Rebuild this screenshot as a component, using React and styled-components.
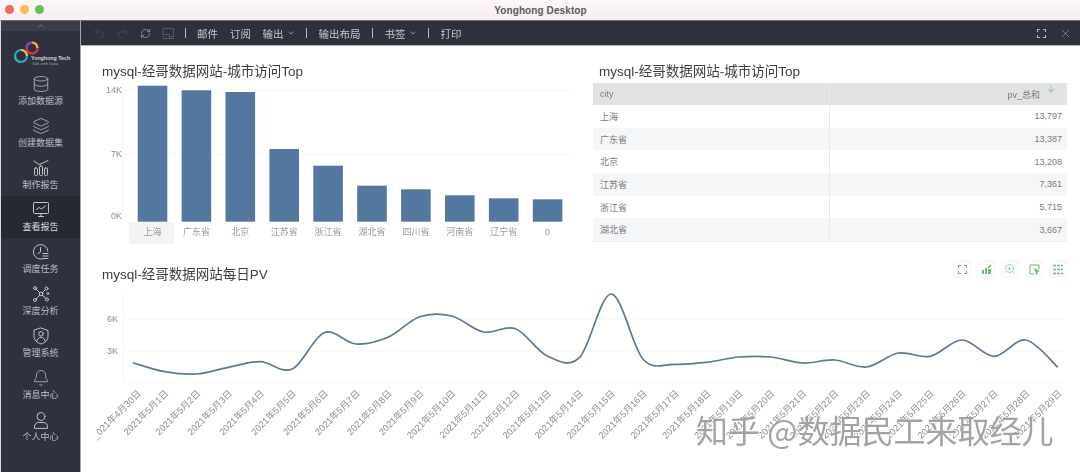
import React from 'react'
import styled, { createGlobalStyle } from 'styled-components'
import { Bell, ChevronDown, ChevronUp, Database, Layers, Redo2, RefreshCw, Undo2, X, ZoomIn, ArrowDown } from 'lucide-react'

const FONT = '"Liberation Sans", "Noto Sans CJK SC", sans-serif'

const GlobalStyle = createGlobalStyle`
  html, body { margin: 0; padding: 0; background: #fff; }
  body { font-family: ${FONT}; overflow: hidden; }
`

const Window = styled.div`
  position: relative;
  width: 1080px;
  height: 472px;
  overflow: hidden;
  display: flex;
  flex-direction: column;
  filter: blur(0.45px);
`

const TitleBar = styled.div`
  height: 20px;
  flex: none;
  display: flex;
  align-items: center;
  justify-content: center;
  background: linear-gradient(#fbf6f8, #f8edf2);
  position: relative;
`

const Lights = styled.div`
  position: absolute;
  left: 5px;
  top: 5px;
  display: flex;
  gap: 6px;
`

const Light = styled.span`
  width: 9px;
  height: 9px;
  border-radius: 50%;
  background: ${p => p.$color};
`

const WindowName = styled.div`
  font-size: 10px;
  font-weight: 700;
  color: #5a5a5e;
  letter-spacing: 0.1px;
  margin-left: 1px;
`

const Body = styled.div`
  flex: 1;
  display: flex;
  min-height: 0;
`

const Sidebar = styled.aside`
  flex: none;
  background: #2f323e;
  border-left: 1px solid #d9d9de;
  border-right: 1px solid #a4a6ad;
  box-sizing: border-box;
  width: 81px;
  display: flex;
  flex-direction: column;
  border-top: 1px solid #6b6c73;
`

const Collapse = styled.div`
  height: 10px;
  background: #3b3e49;
  display: flex;
  align-items: center;
  justify-content: center;
  color: #8a8c94;
`

const LogoBox = styled.div`
  height: 39px;
  flex: none;
`

const NavItem = styled.div`
  height: 42px;
  box-sizing: border-box;
  padding-top: 5px;
  display: flex;
  flex-direction: column;
  align-items: center;
  gap: 1px;
  color: #c3c5cb;
  background: ${p => (p.$active ? '#262832' : 'transparent')};
`

const NavLabel = styled.span`
  font-size: 9px;
  line-height: 14px;
  color: ${p => (p.$active ? '#d9dadf' : '#bcbec5')};
`

const Content = styled.div`
  flex: 1;
  min-width: 0;
  display: flex;
  flex-direction: column;
`

const Toolbar = styled.div`
  height: 26px;
  flex: none;
  box-sizing: border-box;
  background: #2e313d;
  border-top: 1px solid #6b6c73;
  border-bottom: 1px solid #aeb3b3;
  display: flex;
  align-items: center;
  padding: 0 8px 0 11px;
  color: #c3c5cb;
  font-size: 10.5px;
`

const ToolIcon = styled.span`
  width: 14px;
  height: 14px;
  margin-right: 9px;
  display: flex;
  align-items: center;
  justify-content: center;
  color: ${p => (p.$dim ? '#565963' : '#b9bbc2')};
`

const ToolDivider = styled.span`
  width: 1px;
  height: 10px;
  background: #b9bbc2;
  margin: 0 ${p => p.$right || 12}px 0 ${p => p.$left || 11}px;
`

const ToolText = styled.span`
  display: flex;
  align-items: center;
  gap: 3px;
  margin-right: ${p => p.$gap || 0}px;
  color: #c6c8ce;
`

const ToolRight = styled.div`
  margin-left: auto;
  display: flex;
  align-items: center;
  gap: 12px;
  color: #b4b6bd;
`

const Main = styled.main`
  flex: 1;
  min-height: 0;
  display: flex;
  flex-direction: column;
  background: #fff;
`

const TopRow = styled.div`
  height: 214px;
  flex: none;
  display: grid;
  grid-template-columns: 512px 474px;
`

const Panel = styled.section`
  padding-top: 18px;
  min-width: 0;
`

const Title = styled.h2`
  margin: 0 0 ${p => p.$below || 0}px ${p => p.$left || 0}px;
  font-size: 13.5px;
  line-height: 16px;
  font-weight: 400;
  color: #3d3d40;
  white-space: nowrap;
`

const ChartBox = styled.div`
  margin-left: 9px;
`

const Chart = styled.svg`
  display: block;
  font-family: ${FONT};
`

const Table = styled.div`
  display: flex;
  flex-direction: column;
  border-bottom: 1px solid #eeeeef;
`

const Row = styled.div`
  display: grid;
  grid-template-columns: 237px 237px;
  height: ${p => (p.$head ? '22px' : '22.7px')};
  background: ${p => (p.$head ? '#e2e2e3' : p.$alt ? '#f5f6f7' : '#fff')};
  font-size: 9px;
  color: ${p => (p.$head ? '#7c7d80' : '#7a7b7e')};
`

const Cell = styled.div`
  display: flex;
  align-items: center;
  justify-content: ${p => (p.$right ? 'flex-end' : 'flex-start')};
  padding: ${p => (p.$right ? '0 5px 0 0' : '0 0 0 7px')};
  border-right: ${p => (p.$right ? 'none' : '1px solid #e9e9ea')};
`

const SortMark = styled.span`
  width: 22px;
  align-self: flex-start;
  display: flex;
  justify-content: center;
  padding-top: 1px;
  color: #58b868;
`

const LinePanel = styled.section`
  flex: 1;
  min-height: 0;
`

const LineHead = styled.div`
  height: 25px;
  display: flex;
  justify-content: space-between;
  align-items: flex-start;
  padding: 1px 14px 0 21px;
  box-sizing: border-box;
`

const LineTitle = styled(Title)`
  margin-top: 6px;
`

const ActionGroup = styled.div`
  display: flex;
  gap: 8px;
`

const Action = styled.span`
  width: 16px;
  height: 16px;
  border-radius: 3px;
  background: #fbfcfb;
  box-shadow: 0 0 2px rgba(0, 0, 0, 0.14);
  display: flex;
  align-items: center;
  justify-content: center;
  color: #6fb97b;
`

const Watermark = styled.div`
  position: absolute;
  left: 696px;
  top: 410px;
  font-size: 32px;
  line-height: 38px;
  white-space: pre;
  color: rgba(150, 150, 150, 0.88);
  text-shadow: 1px 1px 0 rgba(255, 255, 255, 0.75), -1px 0 0 rgba(255, 255, 255, 0.35);
  font-family: "Noto Sans CJK SC", sans-serif;
`

const line = { fill: 'none', stroke: 'currentColor', strokeWidth: 1, strokeLinecap: 'round', strokeLinejoin: 'round' }

const ReportIcon = () => (
  <svg width="18" height="18" viewBox="0 0 18 18" {...line}>
    <path d="M2 2l5 3.5 4-1.5 5-2.5" />
    <rect x="2.5" y="9" width="3" height="7.5" rx="1" />
    <rect x="7.5" y="7" width="3" height="9.5" rx="1" />
    <rect x="12.5" y="9" width="3" height="7.5" rx="1" />
  </svg>
)

const ScreenIcon = () => (
  <svg width="18" height="18" viewBox="0 0 18 18" {...line}>
    <rect x="1.5" y="1.5" width="15" height="11" rx="1" />
    <path d="M4.5 8.5l2.5-2 2.5 1.5 4-3" />
    <path d="M6.5 15.5h5M9 12.5v3" />
  </svg>
)

const ScheduleIcon = () => (
  <svg width="18" height="18" viewBox="0 0 18 18" {...line}>
    <path d="M11 15.8A7.3 7.3 0 1 1 15.9 8" />
    <path d="M8.5 4.5v4.5l-2.5 1.5" />
    <path d="M11 10.5h5M11 13h5M11 15.5h5" />
  </svg>
)

const GraphIcon = () => (
  <svg width="18" height="18" viewBox="0 0 18 18" {...line}>
    <circle cx="9" cy="9" r="1.8" />
    <circle cx="3" cy="3" r="1.5" />
    <circle cx="14.5" cy="3.5" r="1.5" />
    <circle cx="3" cy="15" r="1.5" />
    <circle cx="15" cy="14.5" r="1.5" />
    <circle cx="15.8" cy="8.5" r="1" />
    <path d="M4 4l3.7 3.7M13.4 4.6l-3.2 3.2M4 14l3.7-3.7M14 13.5l-3.7-3.2" />
  </svg>
)

const ShieldIcon = () => (
  <svg width="18" height="18" viewBox="0 0 18 18" {...line}>
    <path d="M9 1l7 2.5V9c0 4-3 6.8-7 8-4-1.2-7-4-7-8V3.500z" />
    <circle cx="9" cy="6.800" r="2.300" />
    <path d="M5 13.500c.5-2.200 2-3.200 4-3.200s3.500 1 4 3.200" />
  </svg>
)

const PersonIcon = () => (
  <svg width="18" height="18" viewBox="0 0 18 18" {...line}>
    <circle cx="9" cy="5.500" r="4" />
    <path d="M2.500 17c-.6-3.500 1.500-5.500 4-5.500h5c2.500 0 4.600 2 4 5.500z" />
  </svg>
)

const SaveIcon = () => (
  <svg width="13" height="13" viewBox="0 0 13 13" {...line}>
    <rect x="1.500" y="1.500" width="10" height="10" />
    <path d="M1.500 7.500h6v4M7.500 9.500h4" />
  </svg>
)

const Corners = ({ size = 11 }) => (
  <svg width={size} height={size} viewBox="0 0 11 11" {...line} strokeWidth="1.200">
    <path d="M3.500 1.500L1.500 1.500V3.500M7.500 1.500h2v2M3.500 9.500h-2v-2M7.500 9.500h2v-2" />
  </svg>
)

const ChartEditIcon = () => (
  <svg width="11" height="11" viewBox="0 0 11 11" fill="currentColor">
    <rect x="1" y="6" width="2" height="4" />
    <rect x="4" y="4" width="2" height="6" />
    <rect x="7" y="5" width="3" height="5" />
    <path d="M6.500 3.500l3-3 1 1-3 3z" />
  </svg>
)

const PickIcon = () => (
  <svg width="11" height="11" viewBox="0 0 11 11" {...line}>
    <path d="M10 5V1H1v9h4" />
    <path d="M6 5l4 2-1.500.8L7.800 10z" fill="currentColor" />
  </svg>
)

const RowsIcon = () => (
  <svg width="12" height="11" viewBox="0 0 12 11" {...line} strokeWidth="1.300" strokeLinecap="butt">
    <path d="M1 1.500h10M1 5.500h10M1 9.500h10" strokeDasharray="3 1" />
  </svg>
)

const LogoMark = () => (
  <svg width="79" height="39" viewBox="0 30 79 39" style={{ display: 'block', fontFamily: FONT }}>
    <g fill="none" strokeWidth="2.200">
      <circle cx="20" cy="55" r="6" stroke="#2f9fd8" />
      <path d="M20 49a6 6 0 0 1 6 6" stroke="#efc12c" />
      <path d="M14 55a6 6 0 0 0 6 6" stroke="#2ab5a5" />
      <circle cx="31" cy="47" r="5.500" stroke="#d8344f" />
      <path d="M31 41.500a5.500 5.500 0 0 1 5.500 5.500" stroke="#f0b92a" />
      <path d="M25.500 47a5.500 5.500 0 0 1 5.500-5.500" stroke="#8a4bb0" />
    </g>
    <text x="30" y="59" fontSize="5.300" fontWeight="700" fill="#d5d6da">Yonghong Tech</text>
    <text x="31" y="64" fontSize="4.200" fill="#a6a8af">Talk with Data</text>
  </svg>
)

const navItems = [
  { label: '添加数据源', icon: <Database size={18} strokeWidth={1} /> },
  { label: '创建数据集', icon: <Layers size={18} strokeWidth={1} /> },
  { label: '制作报告', icon: <ReportIcon /> },
  { label: '查看报告', icon: <ScreenIcon />, active: true },
  { label: '调度任务', icon: <ScheduleIcon /> },
  { label: '深度分析', icon: <GraphIcon /> },
  { label: '管理系统', icon: <ShieldIcon /> },
  { label: '消息中心', icon: <Bell size={18} strokeWidth={1} /> },
  { label: '个人中心', icon: <PersonIcon /> },
]

const cities = [
  ['上海', '13,797'],
  ['广东省', '13,387'],
  ['北京', '13,208'],
  ['江苏省', '7,361'],
  ['浙江省', '5,715'],
  ['湖北省', '3,667'],
]

// bar tops read off the picture, the base is at y 221.7
const bars = [
  ['上海', 85.7], ['广东省', 90.3], ['北京', 92], ['江苏省', 149], ['浙江省', 165.7],
  ['湖北省', 185.7], ['四川省', 189.3], ['河南省', 195.3], ['辽宁省', 198.3], ['0', 199.3],
]

const pvY = [
  362.7, 371.7, 374, 367.3, 361.7, 369, 332.7, 344, 337.3, 316.7,
  316, 332, 328.7, 356, 357.7, 294, 359.3, 364.3, 362.3, 357,
  357, 363, 360, 367, 353, 356.3, 340, 356.3, 340, 367.3,
]
const pvX = i => 132.7 + i * 31.9

const dateLabel = i => {
  if (i === 0) return '_021年4月30日'
  return `2021年5月${i}日`
}

const smoothPath = () => {
  const pts = pvY.map((y, i) => [pvX(i), y])
  let d = `M${pts[0][0]} ${pts[0][1]}`
  for (let i = 0; i < pts.length - 1; i++) {
    const p0 = pts[i - 1] || pts[i]
    const p1 = pts[i]
    const p2 = pts[i + 1]
    const p3 = pts[i + 2] || p2
    const c1x = p1[0] + (p2[0] - p0[0]) / 6
    const c1y = p1[1] + (p2[1] - p0[1]) / 6
    const c2x = p2[0] - (p3[0] - p1[0]) / 6
    const c2y = p2[1] - (p3[1] - p1[1]) / 6
    d += `C${c1x} ${c1y} ${c2x} ${c2y} ${p2[0]} ${p2[1]}`
  }
  return d
}

const BarChart = () => (
  <Chart width="490" height="170" viewBox="90 80 490 170">
    <path d="M123 90H570M123 154H570" stroke="#f6f6f6" />
    <path d="M123 84V222" stroke="#f3f3f3" />
    <rect x="129" y="222" width="45" height="22" fill="#f3f3f3" />
    <g fontSize="9" fill="#8c8c8e" textAnchor="end">
      <text x="122" y="93">14K</text>
      <text x="122" y="157">7K</text>
      <text x="122" y="219">0K</text>
    </g>
    {bars.map(([name, top], i) => (
      <g key={name}>
        <rect x={137.7 + i * 43.9} y={top} width="29.6" height={221.7 - top} fill="#54779f" />
        <text x={152.5 + i * 43.9} y="234.500" fontSize="9" fill="#9a9a9c" textAnchor="middle">{name}</text>
      </g>
    ))}
  </Chart>
)

const LineChart = () => (
  <Chart width="990" height="162" viewBox="90 285 990 162">
    <path d="M123 319H1064M123 351H1064M123 382H1064" stroke="#f6f6f6" />
    <path d="M123 292V382" stroke="#f6f6f6" />
    <g fontSize="9" fill="#8c8c8e" textAnchor="end">
      <text x="118" y="322">6K</text>
      <text x="118" y="354">3K</text>
    </g>
    <path d={smoothPath()} fill="none" stroke="#5a779c" strokeWidth="1.700" />
    {pvY.map((_, i) => {
      const x = pvX(i) + (i === 0 ? 9 : 4.5)
      return (
        <text key={i} x={x} y="394" fontSize="9.300" fill="#8e8e90" textAnchor="end" transform={`rotate(-45 ${x} 394)`}>
          {dateLabel(i)}
        </text>
      )
    })}
  </Chart>
)

const App = () => {
  return (
    <Window>
      <GlobalStyle />
      <TitleBar>
        <Lights>
          <Light $color="#ee6a5f" />
          <Light $color="#f5bd4f" />
          <Light $color="#61c454" />
        </Lights>
        <WindowName>Yonghong Desktop</WindowName>
      </TitleBar>
      <Body>
        <Sidebar>
          <Collapse><ChevronUp size={10} strokeWidth={1.500} /></Collapse>
          <LogoBox><LogoMark /></LogoBox>
          {navItems.map(item => (
            <NavItem key={item.label} $active={item.active}>
              {item.icon}
              <NavLabel $active={item.active}>{item.label}</NavLabel>
            </NavItem>
          ))}
        </Sidebar>
        <Content>
          <Toolbar>
            <ToolIcon $dim><Undo2 size={13} strokeWidth={1} /></ToolIcon>
            <ToolIcon $dim><Redo2 size={13} strokeWidth={1} /></ToolIcon>
            <ToolIcon><RefreshCw size={11} strokeWidth={1.300} /></ToolIcon>
            <ToolIcon $dim><SaveIcon /></ToolIcon>
            <ToolDivider $left={1} $right={11} />
            <ToolText $gap={12}>邮件</ToolText>
            <ToolText $gap={11.5}>订阅</ToolText>
            <ToolText>输出<ChevronDown size={8} /></ToolText>
            <ToolDivider />
            <ToolText>输出布局</ToolText>
            <ToolDivider />
            <ToolText>书签<ChevronDown size={8} /></ToolText>
            <ToolDivider />
            <ToolText>打印</ToolText>
            <ToolRight>
              <Corners />
              <X size={13} strokeWidth={1} />
            </ToolRight>
          </Toolbar>
          <Main>
            <TopRow>
              <Panel>
                <Title $left={21}>mysql-经哥数据网站-城市访问Top</Title>
                <ChartBox><BarChart /></ChartBox>
              </Panel>
              <Panel>
                <Title $left={6} $below={3}>mysql-经哥数据网站-城市访问Top</Title>
                <Table>
                  <Row $head>
                    <Cell>city</Cell>
                    <Cell $right>
                      pv_总和
                      <SortMark><ArrowDown size={10} strokeWidth={1.500} /></SortMark>
                    </Cell>
                  </Row>
                  {cities.map(([city, pv], i) => (
                    <Row key={city} $alt={i % 2 === 1}>
                      <Cell>{city}</Cell>
                      <Cell $right>{pv}</Cell>
                    </Row>
                  ))}
                </Table>
              </Panel>
            </TopRow>
            <LinePanel>
              <LineHead>
                <LineTitle>mysql-经哥数据网站每日PV</LineTitle>
                <ActionGroup>
                  <Action><Corners /></Action>
                  <Action><ChartEditIcon /></Action>
                  <Action><ZoomIn size={12} strokeWidth={1.200} /></Action>
                  <Action><PickIcon /></Action>
                  <Action><RowsIcon /></Action>
                </ActionGroup>
              </LineHead>
              <ChartBox><LineChart /></ChartBox>
            </LinePanel>
          </Main>
        </Content>
      </Body>
      <Watermark>知乎 @数据民工来取经儿</Watermark>
    </Window>
  )
}

export default App
